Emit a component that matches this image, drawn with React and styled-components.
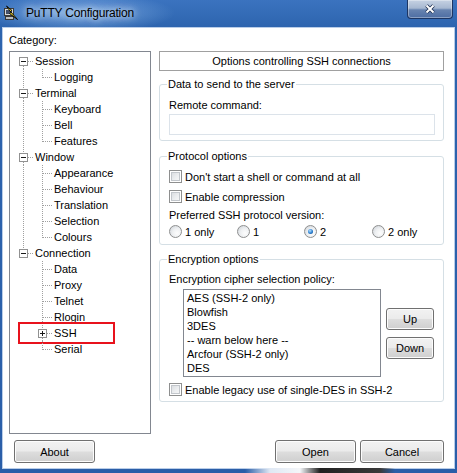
import React from "react";
import styled, { createGlobalStyle } from "styled-components";

const GlobalStyle = createGlobalStyle`
  * { box-sizing: border-box; }
  html, body { margin: 0; padding: 0; }
  body {
    background: #2a5ea8;
    font-family: "Liberation Sans", Arial, sans-serif;
    font-size: 11px;
    color: #000;
  }
`;

const tree = [
  { label: "Session", children: [{ label: "Logging" }] },
  {
    label: "Terminal",
    children: [{ label: "Keyboard" }, { label: "Bell" }, { label: "Features" }],
  },
  {
    label: "Window",
    children: ["Appearance", "Behaviour", "Translation", "Selection", "Colours"].map(
      (label) => ({ label })
    ),
  },
  {
    label: "Connection",
    children: [
      { label: "Data" },
      { label: "Proxy" },
      { label: "Telnet" },
      { label: "Rlogin" },
      { label: "SSH", collapsed: true, marked: true },
      { label: "Serial" },
    ],
  },
];

const ciphers = [
  "AES (SSH-2 only)",
  "Blowfish",
  "3DES",
  "-- warn below here --",
  "Arcfour (SSH-2 only)",
  "DES",
];

const versions = [
  { label: "1 only" },
  { label: "1" },
  { label: "2", checked: true },
  { label: "2 only" },
];

// flatten the tree into rows with their connector cells
const buildRows = () => {
  const rows = [];
  tree.forEach((node, i) => {
    const last = i === tree.length - 1;
    rows.push({
      label: node.label,
      cells: [{ up: i > 0, down: !last, right: true, box: "minus" }],
    });
    node.children.forEach((child, j) => {
      const lastChild = j === node.children.length - 1;
      rows.push({
        label: child.label,
        marked: child.marked,
        cells: [
          { through: !last },
          { up: true, down: !lastChild, right: true, box: child.collapsed ? "plus" : null },
        ],
      });
    });
  });
  return rows;
};

const DOT = { stroke: "#a0a0a0", strokeDasharray: "1 1", strokeWidth: 1 };

const Connector = ({ through, up, down, right, box }) => (
  <ConnectorSvg width="19" height="16" viewBox="0 0 19 16">
    {through && <line x1="9.5" y1="0" x2="9.5" y2="16" {...DOT} />}
    {up && <line x1="9.5" y1="0" x2="9.5" y2={box ? 4 : 9} {...DOT} />}
    {down && <line x1="9.5" y1={box ? 13 : 8} x2="9.5" y2="16" {...DOT} />}
    {right && <line x1={box ? 14 : 10} y1="8.5" x2="19" y2="8.5" {...DOT} />}
    {box && (
      <g>
        <rect x="5.5" y="4.5" width="8" height="8" fill="#fff" stroke="#919191" />
        <line x1="7" y1="8.5" x2="12" y2="8.5" stroke="#1a1a1a" />
        {box === "plus" && <line x1="9.5" y1="6" x2="9.5" y2="11" stroke="#1a1a1a" />}
      </g>
    )}
  </ConnectorSvg>
);

const PuttyIcon = () => (
  <IconSvg width="16" height="16" viewBox="0 0 16 16">
    <rect x="1.5" y="3.5" width="9" height="7" fill="#d6d6d6" stroke="#3a3a3a" />
    <rect x="3" y="5" width="6" height="4" fill="#44506a" />
    <rect x="2.5" y="11.5" width="8" height="3" fill="#bdbdbd" stroke="#3a3a3a" />
    <path
      d="M3.5 1 L9 5.5 L7.5 6.5 L14.5 14.5 L6.5 8.5 L8 7.5 Z"
      fill="#ffe325"
      stroke="#000"
      strokeWidth="0.9"
      strokeLinejoin="round"
    />
  </IconSvg>
);

const CloseGlyph = () => (
  <svg width="12" height="10" viewBox="0 0 12 10">
    <path d="M2.5 1.5 L9.5 8.5 M9.5 1.5 L2.5 8.5" stroke="#1d2f52" strokeWidth="3.6" />
    <path d="M2.5 1.5 L9.5 8.5 M9.5 1.5 L2.5 8.5" stroke="#fff" strokeWidth="2" />
  </svg>
);

export default function App() {
  const rows = buildRows();
  return (
    <>
      <GlobalStyle />
      <Frame>
        <TitleBar>
          <PuttyIcon />
          <Title>PuTTY Configuration</Title>
          <CloseButton aria-label="Close">
            <CloseGlyph />
          </CloseButton>
        </TitleBar>

        <Client>
          <Main>
            <CategoryLabel>Category:</CategoryLabel>
            <TreeBox>
              {rows.map((row) => (
                <TreeRow key={row.label}>
                  {row.cells.map((cell, k) => (
                    <Connector key={k} {...cell} />
                  ))}
                  <TreeLabel>{row.label}</TreeLabel>
                  {row.marked && <Marker />}
                </TreeRow>
              ))}
            </TreeBox>

            <Panel>
              <PanelHeader>Options controlling SSH connections</PanelHeader>

              <Group $mt={7} $pt={8} $pb={5}>
                <Legend>Data to send to the server</Legend>
                <FieldLabel>Remote command:</FieldLabel>
                <TextInput readOnly />
              </Group>

              <Group $mt={9} $pt={7} $pb={6}>
                <Legend>Protocol options</Legend>
                <CheckRow>
                  <CheckBox />
                  Don't start a shell or command at all
                </CheckRow>
                <CheckRow $mt={7}>
                  <CheckBox />
                  Enable compression
                </CheckRow>
                <FieldLabel $mt={6}>Preferred SSH protocol version:</FieldLabel>
                <RadioGrid>
                  {versions.map((v) => (
                    <CheckRow key={v.label}>
                      <Radio $checked={v.checked} />
                      {v.label}
                    </CheckRow>
                  ))}
                </RadioGrid>
              </Group>

              <Group $mt={8} $pt={7} $pb={5}>
                <Legend>Encryption options</Legend>
                <FieldLabel>Encryption cipher selection policy:</FieldLabel>
                <CipherRow>
                  <ListBox>
                    {ciphers.map((c) => (
                      <ListItem key={c}>{c}</ListItem>
                    ))}
                  </ListBox>
                  <SideButtons>
                    <Button $w={48} $h={22}>Up</Button>
                    <Button $w={48} $h={22}>Down</Button>
                  </SideButtons>
                </CipherRow>
                <CheckRow $mt={6}>
                  <CheckBox />
                  Enable legacy use of single-DES in SSH-2
                </CheckRow>
              </Group>
            </Panel>
          </Main>

          <Footer>
            <Button $w={81}>About</Button>
            <Spacer />
            <Button $w={81}>Open</Button>
            <Button $w={84}>Cancel</Button>
          </Footer>
        </Client>
        <FrameBottom />
      </Frame>
    </>
  );
}

const Frame = styled.div`
  width: 457px;
  height: 473px;
  display: flex;
  flex-direction: column;
  overflow: hidden;
  background:
    radial-gradient(ellipse 95px 20px at 80px 13px, rgba(170, 210, 250, 0.6), rgba(170, 210, 250, 0) 100%),
    linear-gradient(180deg, #3b73bf 0px, #2d64ae 28px, #2a5ea8 100%);
`;

const TitleBar = styled.div`
  height: 28px;
  flex: none;
  display: flex;
  align-items: flex-start;
  padding-left: 3px;
`;

const IconSvg = styled.svg`
  display: block;
  flex: none;
  margin-top: 5px;
`;

const Title = styled.div`
  margin-left: 7px;
  line-height: 27px;
  font-family: "Liberation Sans", Arial, sans-serif;
  font-size: 12px;
  letter-spacing: -0.2px;
  color: #000;
  text-shadow: 0 0 6px rgba(230, 242, 255, 0.9), 0 0 10px rgba(230, 242, 255, 0.7);
`;

const CloseButton = styled.button`
  margin-left: auto;
  margin-right: 4px;
  width: 46px;
  height: 19px;
  padding: 0;
  display: flex;
  align-items: center;
  justify-content: center;
  border: 1px solid #1c3563;
  border-top: none;
  border-radius: 0 0 4px 4px;
  background: linear-gradient(180deg, #c6d2e3 0%, #a7b8d1 45%, #6783b0 55%, #4d6da3 100%);
  box-shadow: inset 0 0 0 1px rgba(255, 255, 255, 0.35);
`;

const Client = styled.div`
  margin: 0 3px;
  height: 440px;
  flex: none;
  background: #fff;
  box-shadow: 0 0 0 1px #b9cde8;
  display: flex;
  flex-direction: column;
  padding: 6px 10px 5px 6px;
`;

const FrameBottom = styled.div`
  flex: 1;
  background: linear-gradient(
    90deg,
    rgba(0, 0, 0, 0) 245px,
    #dfe8f4 270px,
    #f4f6f9 300px,
    #202020 320px,
    #3a3a3a 380px,
    rgba(0, 0, 0, 0) 395px
  );
`;

const Main = styled.div`
  display: grid;
  grid-template-columns: 142px 285px;
  grid-template-rows: 13px 383px;
  column-gap: 8px;
  row-gap: 4px;
`;

const CategoryLabel = styled.div`
  grid-column: 1;
  grid-row: 1;
  line-height: 13px;
`;

const TreeBox = styled.div`
  grid-column: 1;
  grid-row: 2;
  border: 1px solid #828790;
  padding: 1px 0 0 4px;
`;

const TreeRow = styled.div`
  position: relative;
  display: flex;
  align-items: center;
  height: 16px;
`;

const ConnectorSvg = styled.svg`
  display: block;
  flex: none;
`;

const TreeLabel = styled.span`
  padding-left: 2px;
  line-height: 16px;
  white-space: nowrap;
`;

const Marker = styled.div`
  position: absolute;
  left: 4px;
  top: -3px;
  width: 97px;
  height: 22px;
  border: 2px solid #e8121c;
  pointer-events: none;
`;

const Panel = styled.div`
  grid-column: 2;
  grid-row: 2;
  display: flex;
  flex-direction: column;
`;

const PanelHeader = styled.div`
  height: 20px;
  border: 1px solid #a0a0a0;
  text-align: center;
  line-height: 18px;
`;

const Group = styled.fieldset`
  margin: ${(p) => p.$mt}px 0 0;
  padding: ${(p) => p.$pt}px 8px ${(p) => p.$pb}px 9px;
  border: 1px solid #d5dfe5;
  border-radius: 3px;
  min-inline-size: 0;
`;

const Legend = styled.legend`
  padding: 0 1px;
  margin-left: -2px;
  line-height: 13px;
`;

const FieldLabel = styled.div`
  margin-top: ${(p) => p.$mt || 0}px;
  line-height: 13px;
`;

const TextInput = styled.input`
  display: block;
  width: 100%;
  height: 21px;
  margin: 2px 0 0;
  padding: 0 3px;
  border: 1px solid #dce3ea;
  background: #fff;
  font: inherit;
  outline: none;
`;

const CheckRow = styled.div`
  display: flex;
  align-items: center;
  gap: 3px;
  height: 13px;
  margin-top: ${(p) => p.$mt || 0}px;
  white-space: nowrap;
`;

const CheckBox = styled.span`
  width: 13px;
  height: 13px;
  flex: none;
  border: 1px solid #8e8f8f;
  background: linear-gradient(135deg, #d3d6da 0%, #eceef0 55%, #fbfbfb 100%);
  box-shadow: inset 0 0 0 1px #fff, inset 0 0 0 2px #c2c6cb;
`;

const Radio = styled.span`
  width: 13px;
  height: 13px;
  flex: none;
  border-radius: 50%;
  border: 1px solid #8e8f8f;
  background: radial-gradient(circle at 65% 65%, #fdfdfd 0%, #eef0f2 45%, #c9ced4 100%);
  display: flex;
  align-items: center;
  justify-content: center;

  &::after {
    content: "";
    display: ${(p) => (p.$checked ? "block" : "none")};
    width: 5px;
    height: 5px;
    border-radius: 50%;
    background: radial-gradient(circle at 40% 35%, #b4e0ff 0%, #2b7fd0 55%, #0c3b7e 100%);
  }
`;

const RadioGrid = styled.div`
  display: grid;
  grid-template-columns: 68px 67px 68px 1fr;
  margin-top: 3px;
`;

const CipherRow = styled.div`
  display: flex;
  align-items: flex-start;
  margin-top: 3px;
  padding-left: 14px;
`;

const ListBox = styled.div`
  width: 198px;
  height: 88px;
  border: 1px solid #828790;
  padding: 1px 3px;
`;

const ListItem = styled.div`
  line-height: 14px;
  white-space: nowrap;
`;

const SideButtons = styled.div`
  display: flex;
  flex-direction: column;
  gap: 7px;
  margin: 19px 0 0 5px;
`;

const Button = styled.button`
  width: ${(p) => p.$w}px;
  height: ${(p) => p.$h || 23}px;
  flex: none;
  padding: 0;
  font: 11px "Liberation Sans", Arial, sans-serif;
  color: #000;
  border: 1px solid #707070;
  border-radius: 3px;
  background: linear-gradient(180deg, #f2f2f2 0%, #ebebeb 48%, #dddddd 52%, #cfcfcf 100%);
  box-shadow: inset 0 0 0 1px #fcfcfc;
`;

const Footer = styled.div`
  display: flex;
  align-items: center;
  gap: 4px;
  margin-top: 6px;
  padding-left: 5px;
`;

const Spacer = styled.div`
  flex: 1;
`;
